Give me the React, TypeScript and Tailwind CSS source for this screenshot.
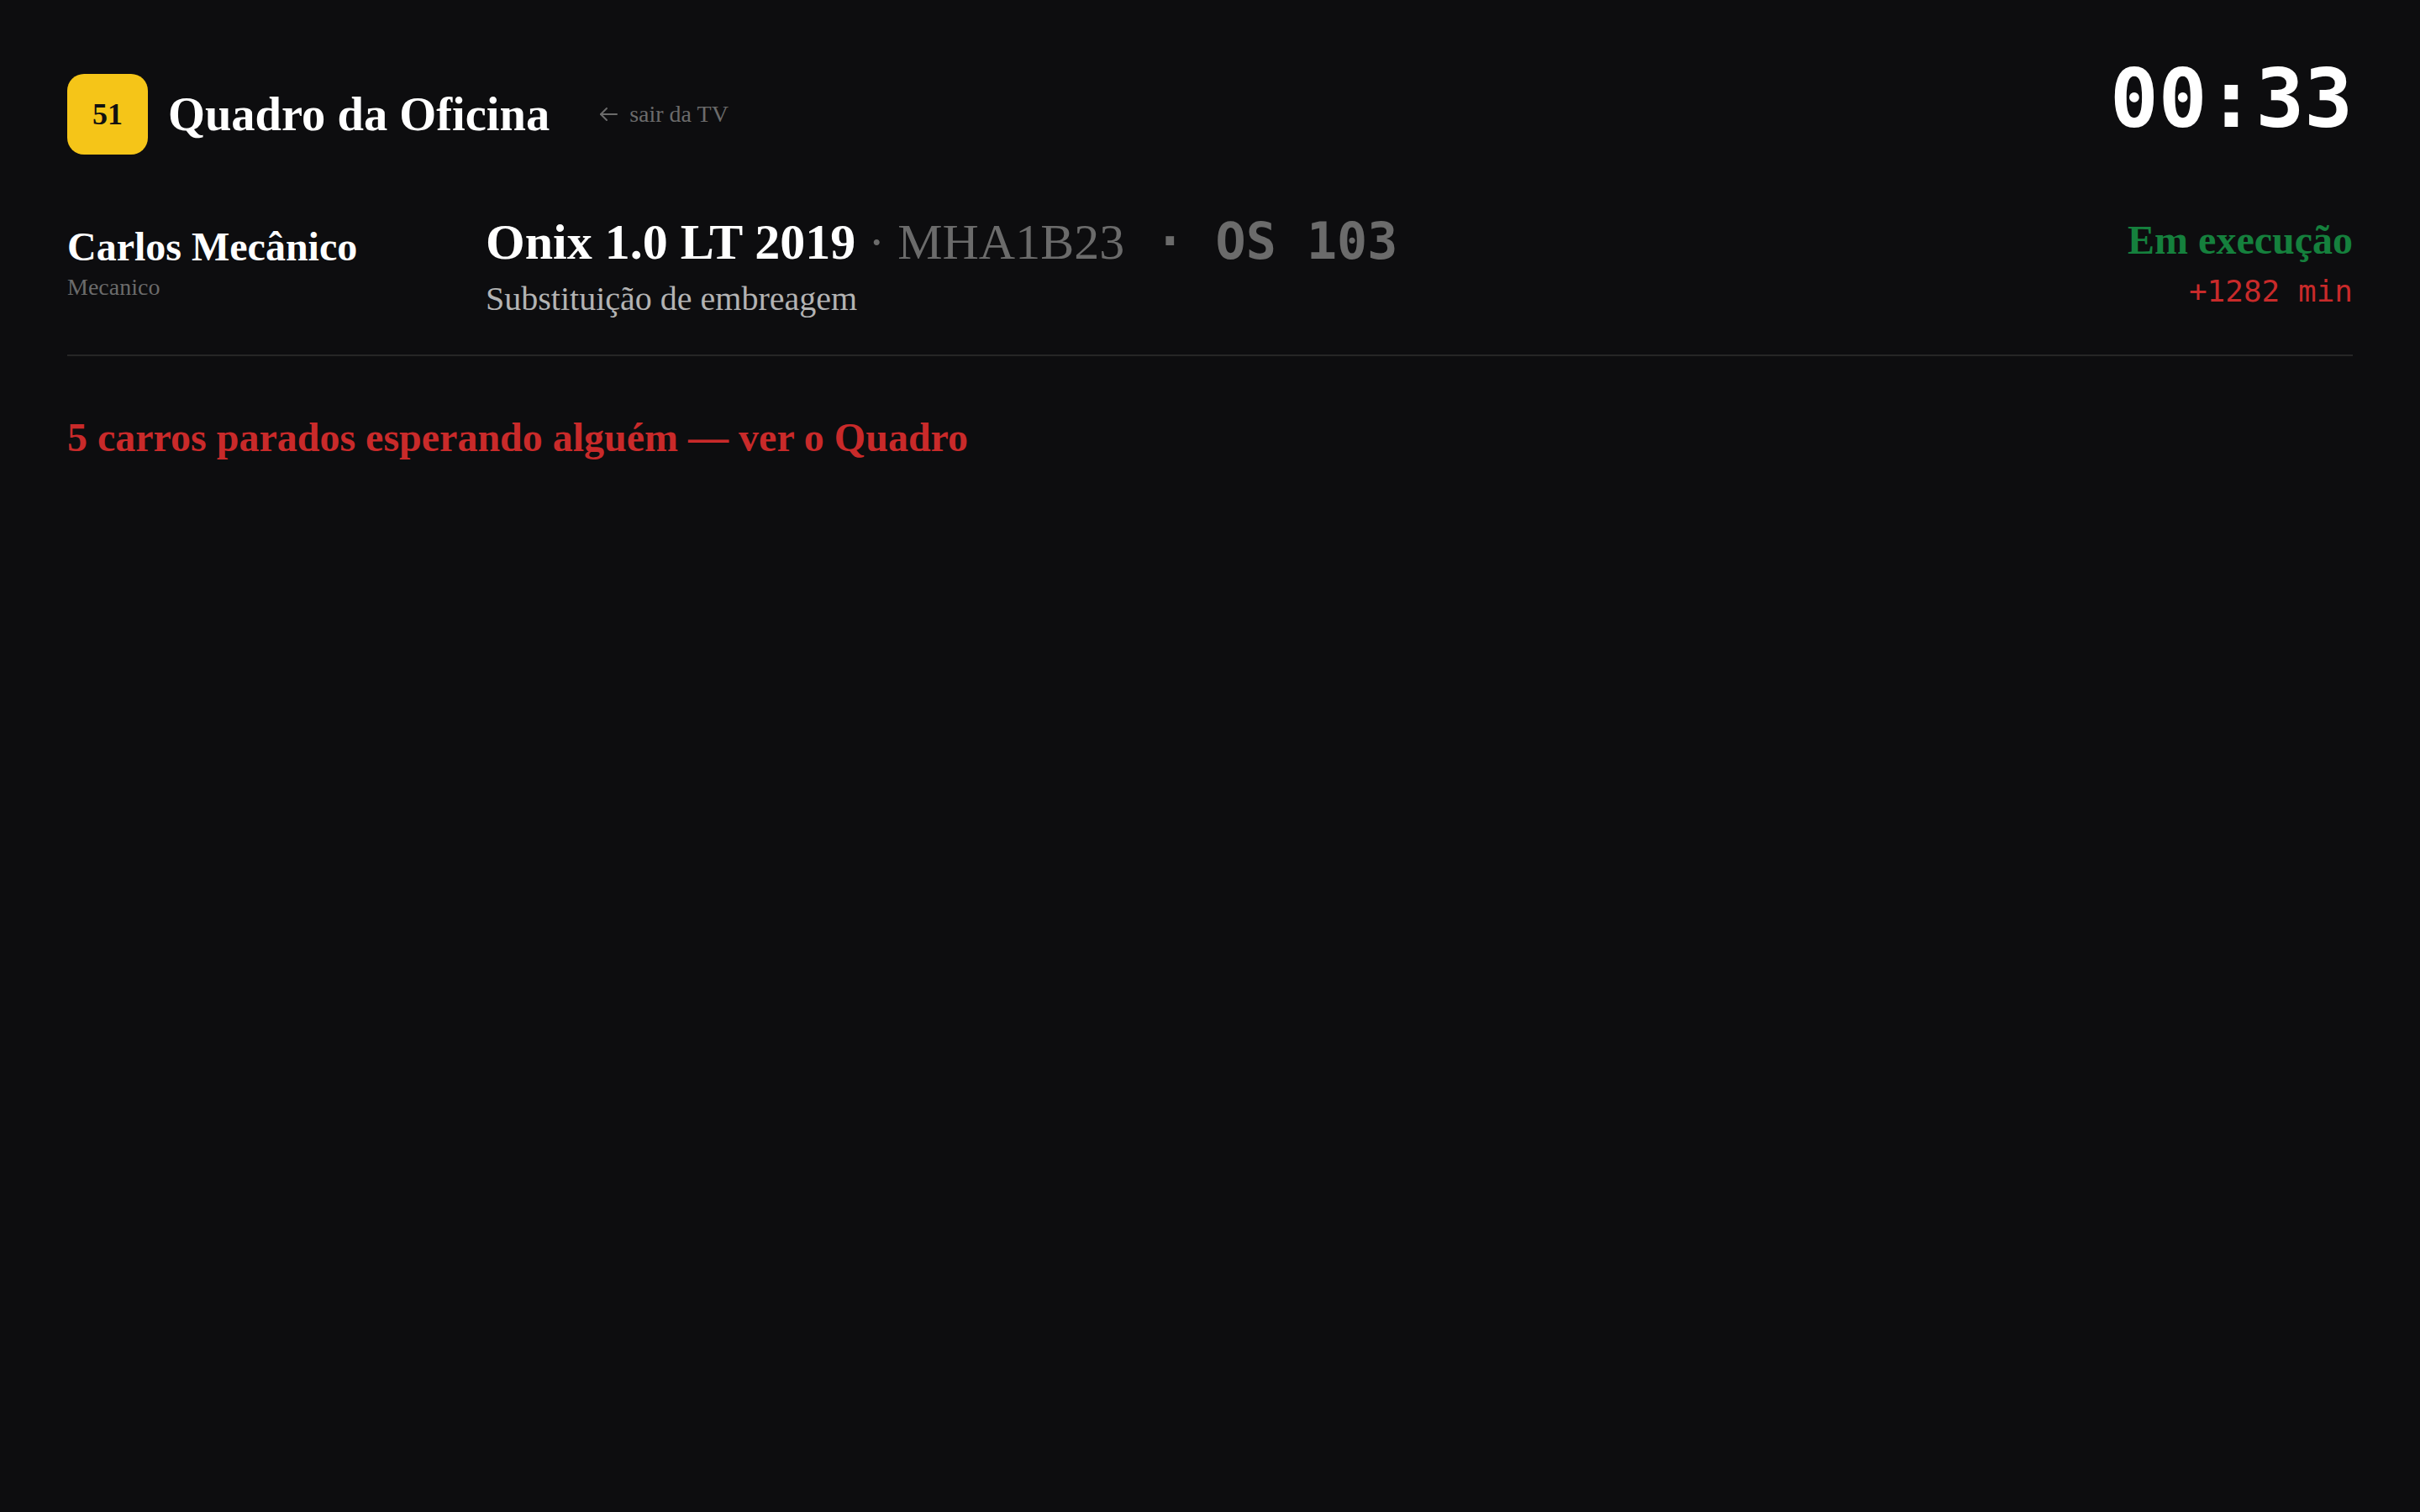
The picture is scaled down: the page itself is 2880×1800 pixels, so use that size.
import React from 'react';

const serif = { fontFamily: '"Liberation Serif", "Times New Roman", serif' };

const App: React.FC = () => {
  const mono = 'font-["DejaVu_Sans_Mono",monospace]';

  return (
    <div className='min-h-screen bg-[#0d0d0f] px-[80px] pt-[72px] font-["Liberation_Serif",serif] text-white'>
      {/* Top bar */}
      <header className="flex items-start justify-between">
        <div className="mt-[16px] flex items-center gap-6">
          <div className="flex h-[96px] w-[96px] items-center justify-center rounded-[20px] bg-[#f5c518] text-[36px] font-bold text-[#111]">
            51
          </div>
          <h1 className="text-[56.5px] font-bold leading-none">Quadro da Oficina</h1>
          <a className="ml-[34px] flex items-center gap-[13px] text-[28px] leading-none text-[#6b6b6b]">
            <svg width="24" height="20" viewBox="0 0 24 20" fill="none" stroke="currentColor" strokeWidth="2" strokeLinecap="round" strokeLinejoin="round">
              <path d="M22 10H3" />
              <path d="M10 3L3 10l7 7" />
            </svg>
            <span>sair da TV</span>
          </a>
        </div>
        <div className={`${mono} mt-[-2px] text-[96px] font-bold leading-none`}>00:33</div>
      </header>

      {/* Current job */}
      <section className="mt-[73px] flex items-start border-b-2 border-[#262626] pb-[46px]">
        <div className="w-[498px] shrink-0">
          <div className="mt-[13px] text-[48px] font-bold leading-none">Carlos Mecânico</div>
          <div className="mt-[10px] text-[28px] leading-none text-[#6b6b6b]">Mecanico</div>
        </div>

        <div className="flex-1">
          <div className="text-[60px] font-bold leading-none whitespace-pre">
            <span>Onix 1.0 LT 2019</span>
            <span className="font-normal text-[#6b6b6b]"> · MHA1B23</span>
            <span className={`${mono} text-[#6b6b6b]`}> · OS 103</span>
          </div>
          <div className="mt-[18px] text-[40px] leading-none text-[#b3b3b3]">Substituição de embreagem</div>
        </div>

        <div className="flex flex-col items-end">
          <div className="mt-[5px] text-[48px] font-bold leading-none text-[#15803d]">Em execução</div>
          <div className={`${mono} mt-[19px] text-[36px] leading-none text-[#c92a2a]`}>+1282 min</div>
        </div>
      </section>

      {/* Alert */}
      <div className="mt-[73px] text-[48px] font-bold leading-none text-[#c92a2a]" style={serif}>
        5 carros parados esperando alguém — ver o Quadro
      </div>
    </div>
  );
};

export default App;
